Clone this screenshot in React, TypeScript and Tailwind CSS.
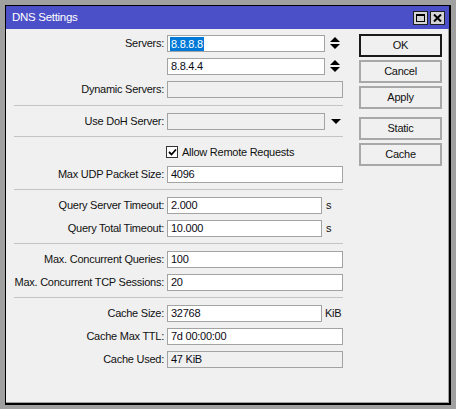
import React from 'react';

const font = { fontFamily: '"Liberation Sans", Arial, sans-serif' };

const Spinner = () => (
  <svg width="10" height="13" viewBox="0 0 10 13" className="ml-[5px] shrink-0">
    <polygon points="5,0 10,5 0,5" fill="#000" />
    <polygon points="0,7 10,7 5,12" fill="#000" />
  </svg>
);

const DropArrow = () => (
  <svg width="10" height="6" viewBox="0 0 10 6" className="ml-[6px] shrink-0">
    <polygon points="0,0 10,0 5,5" fill="#000" />
  </svg>
);

const Field = ({
  value,
  width,
  disabled,
  selected,
}: {
  value?: string;
  width: string;
  disabled?: boolean;
  selected?: boolean;
}) => (
  <div
    className={`${width} h-[17px] border border-[#a3a3a3] flex items-center pl-[2px] text-[#0a0a14] ${
      disabled ? 'bg-[#f0f0f0]' : 'bg-white'
    }`}
  >
    {selected ? (
      <span className="bg-[#0078d7] text-white px-px leading-[14px]">{value}</span>
    ) : (
      <span className="px-px">{value}</span>
    )}
  </div>
);

const Row = ({ label, children }: { label?: string; children: React.ReactNode }) => (
  <div className="flex items-center h-[17px]">
    <div className="w-[150px] shrink-0 text-right text-[#111]">{label}</div>
    <div className="ml-[3px] flex items-center">{children}</div>
  </div>
);

const Sep = ({ extra }: { extra?: boolean }) => (
  <div className={`h-[2px] border-t border-[#c4c4c4] ${extra ? 'mt-px' : ''}`} />
);

const Btn = ({ label, primary, className = '' }: { label: string; primary?: boolean; className?: string }) => (
  <div
    className={`h-[23px] w-[83px] flex items-center justify-center bg-[#f0f0f0] border-2 text-[#111] ${
      primary ? 'border-[#1a1a1a]' : 'border-[#a8a8a8]'
    } ${className}`}
  >
    {label}
  </div>
);

export default function App() {
  return (
    <div className="w-[456px] h-[409px] bg-[#a0a0a0] p-[5px] text-[11px] tracking-[-0.25px]" style={font}>
      <div className="w-[446px] h-[400px] border-l border-t border-r-2 border-b-2 border-black flex flex-col">
        {/* title bar */}
        <div className="h-[23px] bg-[#4b4fc8] flex items-center pl-[6px] pr-[4px] shrink-0">
          <span className="text-white text-[11.5px] tracking-[-0.3px] flex-1">DNS Settings</span>
          <div className="flex gap-[2px]">
            <div className="w-[15px] h-[14px] bg-[#d4d4d4] border border-[#202020] flex items-center justify-center">
              <div className="w-[9px] h-[8px] border border-black border-t-2" />
            </div>
            <div className="w-[15px] h-[14px] bg-[#d4d4d4] border border-[#202020] flex items-center justify-center">
              <svg width="9" height="8" viewBox="0 0 9 8">
                <path d="M1 0.5 L8 7.5 M8 0.5 L1 7.5" stroke="#000" strokeWidth="2" />
              </svg>
            </div>
          </div>
        </div>

        {/* body */}
        <div className="flex-1 bg-[#f0f0f0] border-r border-b border-[#a0a0a0] flex pl-[8px] pt-[5px]">
          <div className="w-[329px] flex flex-col gap-[6px] pt-px">
            <Row label="Servers:">
              <Field width="w-[158px]" value="8.8.8.8" selected />
              <Spinner />
            </Row>
            <Row>
              <Field width="w-[158px]" value="8.8.4.4" />
              <Spinner />
            </Row>
            <Row label="Dynamic Servers:">
              <Field width="w-[176px]" disabled />
            </Row>
            <Sep extra />
            <Row label="Use DoH Server:">
              <Field width="w-[158px]" disabled />
              <DropArrow />
            </Row>
            <Sep />
            <div className="flex items-center h-[16px]">
              <div className="w-[150px] shrink-0" />
              <div className="ml-[2px] flex items-center">
                <div className="w-[12px] h-[12px] border border-[#333] bg-white flex items-center justify-center">
                  <svg width="9" height="8" viewBox="0 0 9 8">
                    <path d="M1 4 L3.5 6.5 L8 1.5" fill="none" stroke="#000" strokeWidth="1.8" />
                  </svg>
                </div>
                <span className="ml-[4px] text-[#111]">Allow Remote Requests</span>
              </div>
            </div>
            <Row label="Max UDP Packet Size:">
              <Field width="w-[176px]" value="4096" />
            </Row>
            <Sep />
            <Row label="Query Server Timeout:">
              <Field width="w-[155px]" value="2.000" />
              <span className="ml-[4px] text-[#111]">s</span>
            </Row>
            <Row label="Query Total Timeout:">
              <Field width="w-[155px]" value="10.000" />
              <span className="ml-[4px] text-[#111]">s</span>
            </Row>
            <Sep />
            <Row label="Max. Concurrent Queries:">
              <Field width="w-[176px]" value="100" />
            </Row>
            <Row label="Max. Concurrent TCP Sessions:">
              <Field width="w-[176px]" value="20" />
            </Row>
            <Sep />
            <Row label="Cache Size:">
              <Field width="w-[155px]" value="32768" />
              <span className="ml-[3px] text-[#111]">KiB</span>
            </Row>
            <Row label="Cache Max TTL:">
              <Field width="w-[176px]" value="7d 00:00:00" />
            </Row>
            <Row label="Cache Used:">
              <Field width="w-[176px]" value="47 KiB" disabled />
            </Row>
          </div>

          <div className="ml-[16px] flex flex-col gap-[3px]">
            <Btn label="OK" primary />
            <Btn label="Cancel" />
            <Btn label="Apply" />
            <Btn label="Static" className="mt-[5px]" />
            <Btn label="Cache" />
          </div>
        </div>
      </div>
    </div>
  );
}
